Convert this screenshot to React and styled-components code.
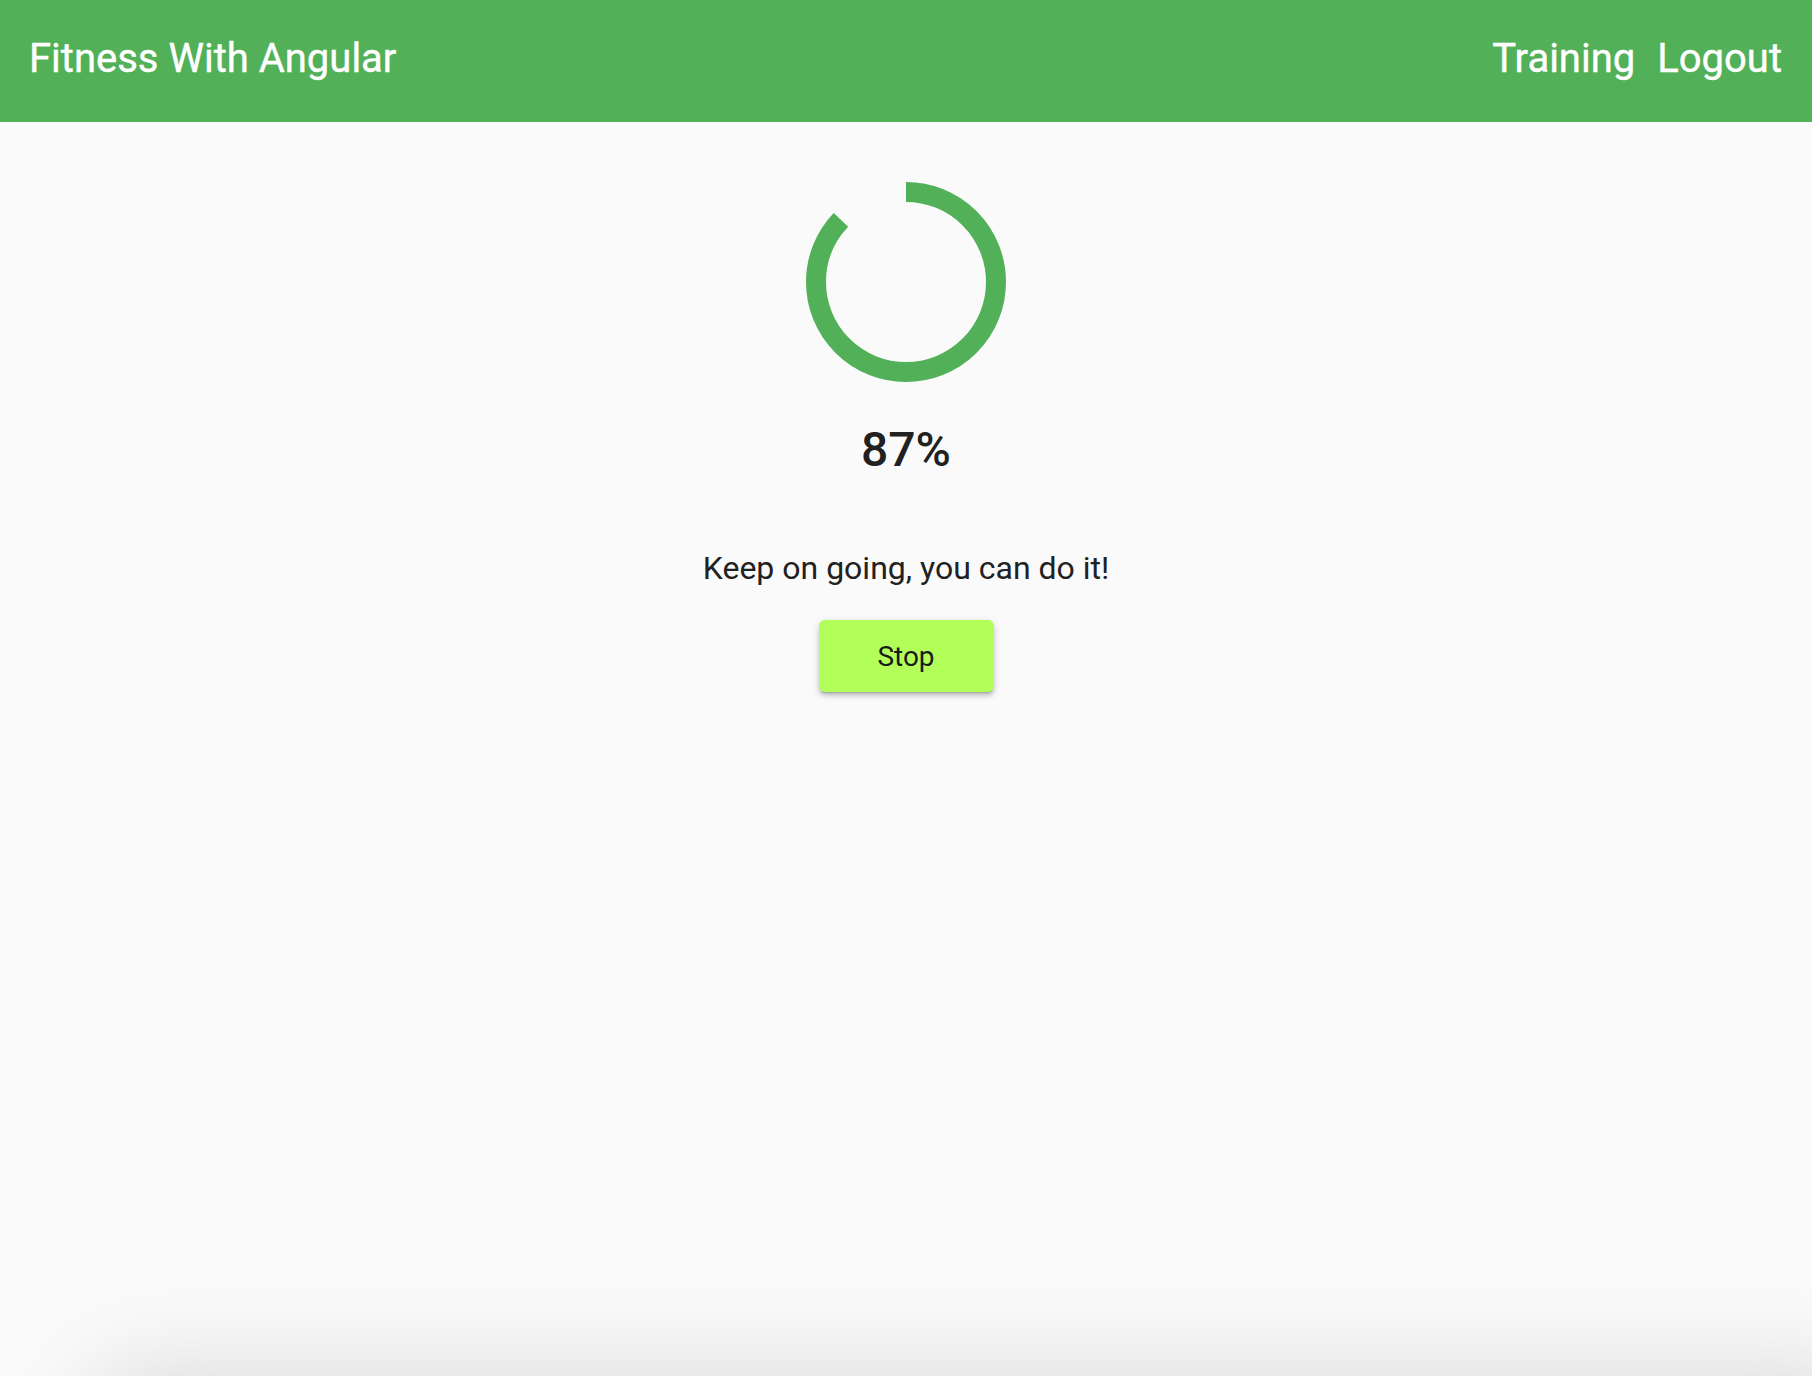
import styled, { createGlobalStyle } from 'styled-components'

const GlobalStyle = createGlobalStyle`
    html, body {
        margin: 0;
        padding: 0;
        background: #fafafa;
        font-family: Roboto, "Noto Sans", sans-serif;
        overflow: hidden;
    }
`

const progress = 87

const Spinner = ({value}) => {
    const r = 90
    const circ = 2 * Math.PI * r
    return (
        <SpinnerSvg viewBox="0 0 200 200" width="200" height="200">
            <circle
                cx="100" cy="100" r={r}
                fill="none"
                stroke="#51b058"
                strokeWidth="20"
                strokeDasharray={circ}
                strokeDashoffset={circ * (1 - value / 100)}
                transform="rotate(-90 100 100)"
            />
        </SpinnerSvg>
    )
}

const App = () => {
    return (
        <>
            <GlobalStyle/>
            <Page>
                <Toolbar>
                    <Title>Fitness With Angular</Title>
                    <Nav>
                        <NavLink>Training</NavLink>
                        <NavLink>Logout</NavLink>
                    </Nav>
                </Toolbar>
                <Content>
                    <Spinner value={progress}/>
                    <Percent>{progress}%</Percent>
                    <Message>Keep on going, you can do it!</Message>
                    <StopButton>Stop</StopButton>
                </Content>
                <BottomShade/>
            </Page>
        </>
    )
}

export default App

//styled components

const Page = styled.div`
    min-height: 100vh;
    background: #fafafa;
`

const Toolbar = styled.header`
    height: 122px;
    box-sizing: border-box;
    background-color: #51b058;
    color: #fff;
    display: flex;
    align-items: center;
    justify-content: space-between;
    padding: 0 30px 6px 29px;
    font-size: 40px;
    font-weight: 400;
    -webkit-text-stroke: 0.4px #fff;
`

const Title = styled.div`
    white-space: nowrap;
`

const Nav = styled.nav`
    display: flex;
    gap: 22px;
`

const NavLink = styled.a`
    color: #fff;
    cursor: pointer;
`

const Content = styled.main`
    display: flex;
    flex-direction: column;
    align-items: center;
    padding-top: 60px;
`

const SpinnerSvg = styled.svg`
    display: block;
`

const Percent = styled.h1`
    margin: 36px 0 0 0;
    font-size: 48px;
    line-height: 64px;
    font-weight: 500;
    color: #212121;
`

const Message = styled.p`
    margin: 66px 0 0 0;
    font-size: 32px;
    line-height: 40px;
    color: #212121;
`

const StopButton = styled.button`
    margin-top: 32px;
    width: 175px;
    height: 72px;
    border: none;
    border-radius: 6px;
    background: #b2ff59;
    color: #1a1a1a;
    font-family: Roboto, sans-serif;
    font-size: 28px;
    font-weight: 400;
    box-shadow: 0 3px 2px -2px rgba(0,0,0,.2), 0 4px 4px 0 rgba(0,0,0,.14), 0 2px 10px 0 rgba(0,0,0,.12);
    cursor: pointer;
`

const BottomShade = styled.div`
    position: fixed;
    left: 90px;
    right: -60px;
    bottom: -120px;
    height: 120px;
    border-radius: 60px;
    box-shadow: 0 0 90px 10px rgba(0,0,0,0.12);
    pointer-events: none;
`
